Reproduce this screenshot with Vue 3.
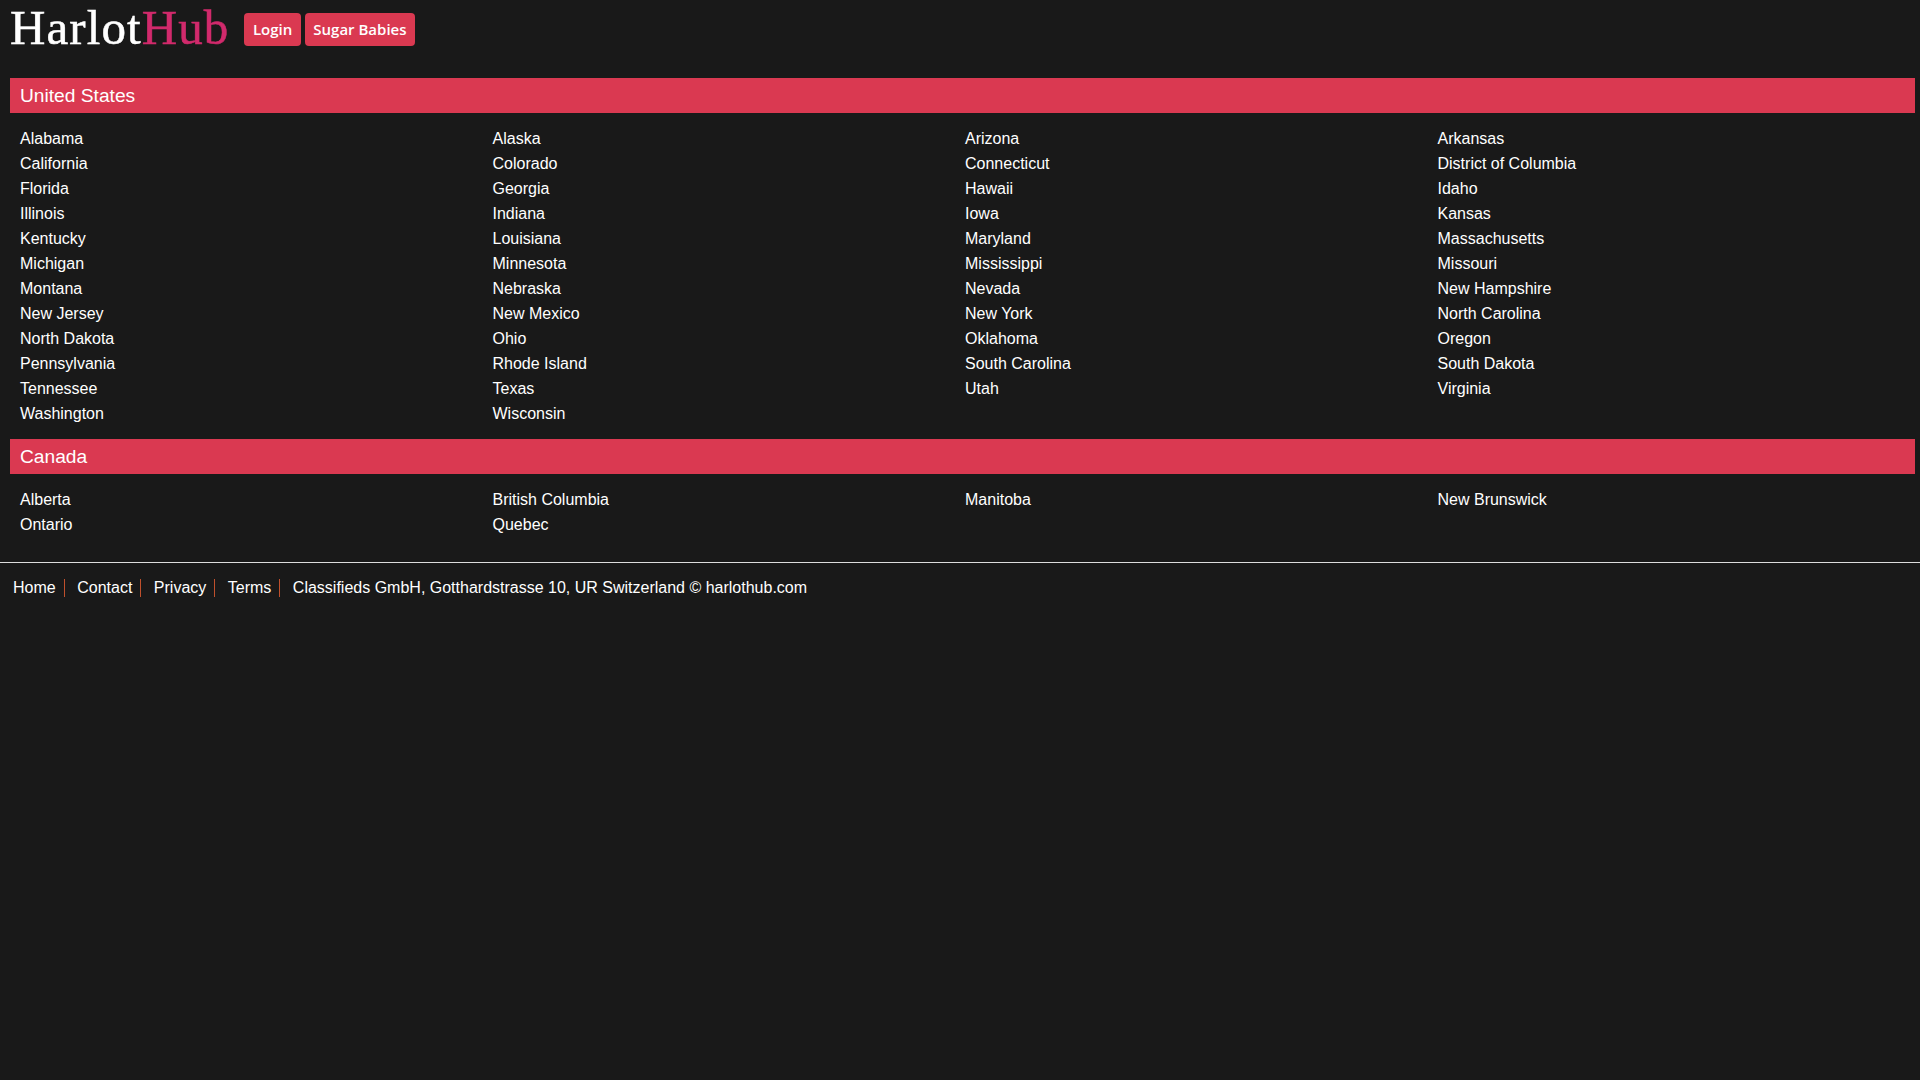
<template>
  <div class="page">
    <header class="top">
      <a class="logo">Harlot<span class="logo-hub">Hub</span></a>
      <div class="top-buttons">
        <a class="btn">Login</a>
        <a class="btn">Sugar Babies</a>
      </div>
    </header>

    <section v-for="country in countries" :key="country.name" class="country">
      <h2 class="country-title">{{ country.name }}</h2>
      <ul class="regions">
        <li v-for="region in country.regions" :key="region">{{ region }}</li>
      </ul>
    </section>

    <footer class="foot">
      <a v-for="link in links" :key="link" class="foot-link">{{ link }}</a>
      <span class="foot-text">Classifieds GmbH, Gotthardstrasse 10, UR Switzerland © harlothub.com</span>
    </footer>
  </div>
</template>

<script setup>
const countries = [
  {
    name: 'United States',
    regions: [
      'Alabama', 'Alaska', 'Arizona', 'Arkansas',
      'California', 'Colorado', 'Connecticut', 'District of Columbia',
      'Florida', 'Georgia', 'Hawaii', 'Idaho',
      'Illinois', 'Indiana', 'Iowa', 'Kansas',
      'Kentucky', 'Louisiana', 'Maryland', 'Massachusetts',
      'Michigan', 'Minnesota', 'Mississippi', 'Missouri',
      'Montana', 'Nebraska', 'Nevada', 'New Hampshire',
      'New Jersey', 'New Mexico', 'New York', 'North Carolina',
      'North Dakota', 'Ohio', 'Oklahoma', 'Oregon',
      'Pennsylvania', 'Rhode Island', 'South Carolina', 'South Dakota',
      'Tennessee', 'Texas', 'Utah', 'Virginia',
      'Washington', 'Wisconsin'
    ]
  },
  {
    name: 'Canada',
    regions: [
      'Alberta', 'British Columbia', 'Manitoba', 'New Brunswick',
      'Ontario', 'Quebec'
    ]
  }
]

const links = ['Home', 'Contact', 'Privacy', 'Terms']
</script>

<style>
html,
body {
  background: #191919;
}
</style>

<style scoped>
.page {
  min-height: 1080px;
  padding: 0 5px 0 10px;
  background: #191919;
  color: #fff;
  font-family: "Liberation Sans", Arial, sans-serif;
  font-size: 16px;
}

.top {
  display: flex;
  align-items: flex-start;
  height: 78px;
}

.logo {
  font-family: "Liberation Serif", Georgia, serif;
  font-size: 49px;
  line-height: 56px;
  letter-spacing: 1.1px;
  -webkit-text-stroke: 0.5px currentColor;
  color: #fff;
}

.logo-hub {
  color: #d12a6c;
}

.top-buttons {
  display: flex;
  gap: 4px;
  margin: 13px 0 0 15px;
}

.btn {
  padding: 0 8.5px;
  height: 33px;
  line-height: 33px;
  background: #da3951;
  border-radius: 4px;
  color: #fff;
  font-family: "Open Sans", sans-serif;
  font-size: 15px;
  font-weight: 600;
}

.country-title {
  margin: 0;
  height: 35px;
  padding: 0 10px;
  background: #da3951;
  font-size: 19.2px;
  font-weight: 400;
  line-height: 35px;
}

.regions {
  display: grid;
  grid-template-columns: repeat(4, 472.5px);
  grid-auto-rows: 25px;
  margin: 0;
  padding: 13px 0 13px 10px;
  list-style: none;
  line-height: 25px;
}

.foot {
  display: flex;
  align-items: center;
  height: 50px;
  margin: 12px -5px 0 -10px;
  padding-left: 13px;
  border-top: 1px solid #ddd;
}

.foot-link {
  padding-right: 8px;
  margin-right: 12.5px;
  border-right: 1px solid #c0502c;
  line-height: 18px;
}
</style>
